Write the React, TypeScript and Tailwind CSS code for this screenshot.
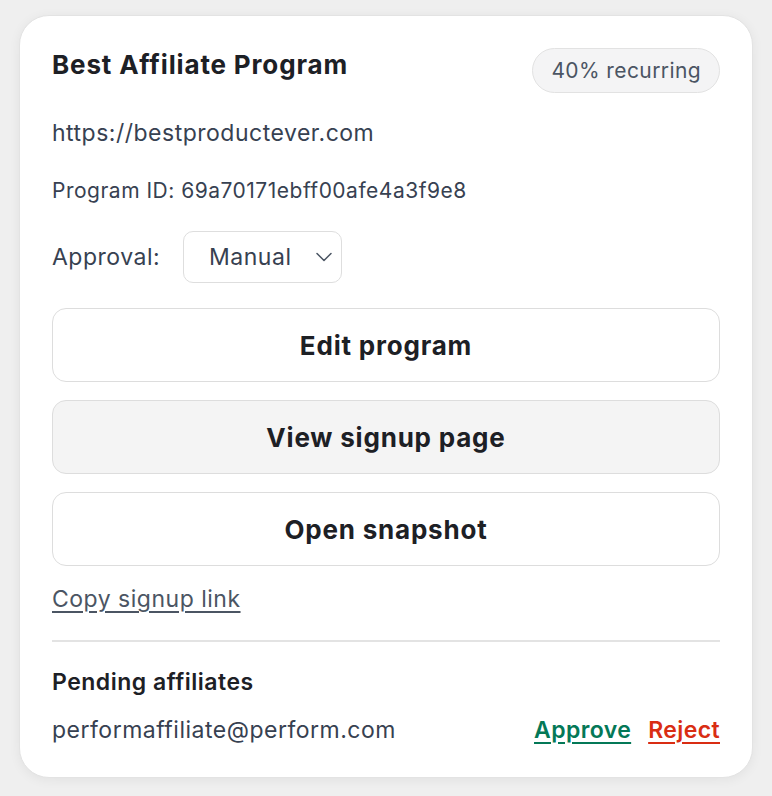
import React from "react";

export default function App() {
  return (
    <div className="min-h-[796px] w-[772px] bg-[#efefef] pl-[19px] pt-[15px]" style={{ fontFamily: "Inter, 'Noto Sans', sans-serif" }}>
      <div className="flex w-[734px] flex-col rounded-[30px] border border-[#e3e3e3] bg-white px-[32px] pb-[33px] pt-[32px] shadow-[0_2px_12px_rgba(0,0,0,0.06)]">
        <div className="flex items-start justify-between">
          <h1 className="mt-[1px] text-[26px] font-bold leading-[32px] tracking-[0.85px] text-[#1d2025]">Best Affiliate Program</h1>
          <span className="flex h-[45px] items-center rounded-full border border-[#e2e2e2] bg-[#f4f4f5] px-[18px] text-[21px] tracking-[0.4px] text-[#4b5563]">40% recurring</span>
        </div>
        <div className="mt-[26px] text-[23px] leading-[28px] tracking-[0.5px] text-[#374151]">https://bestproductever.com</div>
        <div className="mt-[31px] text-[21px] leading-[26px] tracking-[0.5px] text-[#374151]">Program ID: 69a70171ebff00afe4a3f9e8</div>
        <div className="mt-[27px] flex items-center gap-[23px]">
          <span className="text-[23px] leading-[28px] tracking-[0.5px] text-[#374151]">Approval:</span>
          <div className="flex h-[52px] w-[159px] items-center justify-between rounded-[10px] border border-[#dedede] bg-white pl-[25px] pr-[9px] text-[23px] tracking-[0.5px] text-[#374151]">
            <span>Manual</span>
            <svg width="16" height="10" viewBox="0 0 16 10" fill="none" stroke="#4b5563" strokeWidth="1.5" strokeLinecap="round" strokeLinejoin="round">
              <path d="M1 1.5l7 7 7-7" />
            </svg>
          </div>
        </div>
        <div className="mt-[25px] flex flex-col gap-[18px]">
          <button className="h-[74px] w-full rounded-[14px] border border-[#dddddd] bg-white text-[26px] font-bold tracking-[0.8px] text-[#1d2025]">Edit program</button>
          <button className="h-[74px] w-full rounded-[14px] border border-[#dddddd] bg-[#f4f4f4] text-[26px] font-bold tracking-[0.8px] text-[#1d2025]">View signup page</button>
          <button className="h-[74px] w-full rounded-[14px] border border-[#dddddd] bg-white text-[26px] font-bold tracking-[0.8px] text-[#1d2025]">Open snapshot</button>
        </div>
        <a className="mt-[19px] self-start text-[23px] leading-[28px] tracking-[0.5px] text-[#4b5563] underline decoration-[1.5px] underline-offset-[4px]">Copy signup link</a>
        <div className="mt-[27px] h-[2px] bg-[#e3e3e3]" />
        <div className="mt-[26px] text-[23px] font-semibold leading-[28px] tracking-[0.5px] text-[#1d2025]">Pending affiliates</div>
        <div className="mt-[20px] flex items-center justify-between">
          <span className="text-[23px] leading-[28px] tracking-[0.5px] text-[#374151]">performaffiliate@perform.com</span>
          <div className="flex items-center gap-[17px]">
            <a className="text-[23px] font-semibold leading-[28px] tracking-[0.4px] text-[#047857] underline decoration-[1.5px] underline-offset-[4px]">Approve</a>
            <a className="text-[23px] font-semibold leading-[28px] tracking-[0.4px] text-[#d92d13] underline decoration-[1.5px] underline-offset-[4px]">Reject</a>
          </div>
        </div>
      </div>
    </div>
  );
}
